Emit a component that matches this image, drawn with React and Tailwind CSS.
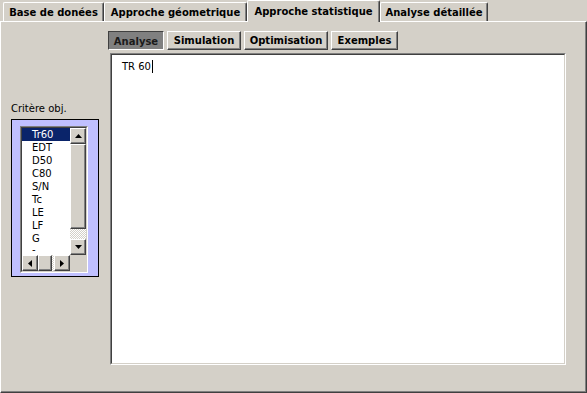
import React from 'react';

const font = "font-['DejaVu_Sans',sans-serif]";

const raised =
  'border border-t-white border-l-white border-r-[#404040] border-b-[#404040] shadow-[inset_-1px_-1px_#808080]';

const Arrow = ({ dir }) => {
  const pts = {
    up: '0,4 3.5,0 7,4',
    down: '0,0 3.5,4 7,0',
    left: '4,0 0,3.5 4,7',
    right: '0,0 4,3.5 0,7',
  }[dir];
  const vertical = dir === 'up' || dir === 'down';
  return (
    <svg width={vertical ? 7 : 4} height={vertical ? 4 : 7} viewBox={vertical ? '0 0 7 4' : '0 0 4 7'}>
      <polygon points={pts} fill="#000" />
    </svg>
  );
};

const ScrollButton = ({ dir }) => (
  <div className={`w-[16px] h-[16px] shrink-0 bg-[#d4d0c8] flex items-center justify-center ${raised}`}>
    <Arrow dir={dir} />
  </div>
);

const Track = ({ className }) => (
  <div
    className={`bg-[repeating-conic-gradient(#ffffff_0_25%,#d4d0c8_0_50%)] bg-[length:2px_2px] ${className}`}
  />
);

const TopTab = ({ label, width, active }) =>
  active ? (
    <div
      className="relative z-10 -mb-px h-[22px] bg-[#d4d0c8] border-t border-l border-t-white border-l-white border-r border-r-[#404040] shadow-[inset_-1px_0_#808080] rounded-t-[2px] flex items-start justify-center pt-[3px] text-[10px] font-bold text-black"
      style={{ width }}
    >
      {label}
    </div>
  ) : (
    <div
      className="h-[19px] bg-[#d4d0c8] border-t border-l border-t-white border-l-white border-r border-r-[#404040] shadow-[inset_-1px_0_#808080] rounded-t-[2px] flex items-center justify-center text-[10px] font-bold text-black"
      style={{ width }}
    >
      {label}
    </div>
  );

const SubTab = ({ label, width, active }) =>
  active ? (
    <div
      className="h-[19px] bg-[#808080] border border-t-[#404040] border-l-[#404040] border-r-white border-b-white flex items-center justify-center text-[10px] font-bold text-[#1a1a1a] pt-[2px]"
      style={{ width }}
    >
      {label}
    </div>
  ) : (
    <div
      className={`h-[19px] bg-[#d4d0c8] flex items-center justify-center text-[10px] font-bold text-black ${raised}`}
      style={{ width }}
    >
      {label}
    </div>
  );

const items = ['Tr60', 'EDT', 'D50', 'C80', 'S/N', 'Tc', 'LE', 'LF', 'G'];

export default function App() {
  return (
    <div className={`w-[587px] h-[393px] bg-[#d4d0c8] flex flex-col ${font} select-none`}>
      {/* top tabs */}
      <div className="h-[21px] flex items-end pl-[3px] shrink-0">
        <TopTab label="Base de donées" width={101} />
        <TopTab label="Approche géometrique" width={143} />
        <TopTab label="Approche statistique" width={133} active />
        <TopTab label="Analyse détaillée" width={108} />
      </div>

      {/* panel */}
      <div className="flex-1 flex border-t border-l border-t-white border-l-white border-r border-b border-r-[#404040] border-b-[#404040] shadow-[inset_-1px_-1px_#808080]">
        {/* left column */}
        <div className="w-[107px] shrink-0 pl-[10px] pt-[80px] flex flex-col">
          <div className="h-[14px] leading-[14px] text-[10px] text-black">Critère obj.</div>
          <div className="mt-[3px] w-[88px] h-[158px] border border-[#000] bg-[#c0c0ff] pl-[8px] pt-[6px]">
            <div className="w-[68px] h-[147px] border border-t-[#808080] border-l-[#808080] border-r-white border-b-white">
              <div className="w-full h-full border border-t-[#404040] border-l-[#404040] border-r-[#d4d0c8] border-b-[#d4d0c8] bg-white flex flex-col">
                <div className="flex h-[127px]">
                  <div className="w-[48px] overflow-hidden">
                    {items.map((it, i) => (
                      <div
                        key={it}
                        className={`h-[13px] leading-[13px] pl-[10px] text-[10px] ${
                          i === 0 ? 'bg-[#0a246a] text-white' : 'text-black'
                        }`}
                      >
                        {it}
                      </div>
                    ))}
                    <div className="h-[10px] leading-[10px] pl-[10px] text-[10px] text-black">-</div>
                  </div>
                  <div className="w-[16px] flex flex-col">
                    <ScrollButton dir="up" />
                    <div className={`h-[85px] bg-[#d4d0c8] ${raised}`} />
                    <Track className="flex-1" />
                    <ScrollButton dir="down" />
                  </div>
                </div>
                <div className="flex h-[16px]">
                  <ScrollButton dir="left" />
                  <div className={`w-[14px] h-[16px] bg-[#d4d0c8] ${raised}`} />
                  <Track className="w-[2px] h-[16px]" />
                  <ScrollButton dir="right" />
                  <div className="flex-1 bg-[#d4d0c8]" />
                </div>
              </div>
            </div>
          </div>
        </div>

        {/* right column */}
        <div className="flex-1 pt-[9px] flex flex-col">
          <div className="flex gap-[3px]">
            <SubTab label="Analyse" width={56} active />
            <SubTab label="Simulation" width={74} />
            <SubTab label="Optimisation" width={84} />
            <SubTab label="Exemples" width={67} />
          </div>
          <div className="mt-[3px] ml-[2px] w-[456px] h-[312px] border border-t-[#808080] border-l-[#808080] border-r-white border-b-white">
            <div className="w-full h-full border border-t-[#404040] border-l-[#404040] border-r-[#d4d0c8] border-b-[#d4d0c8] bg-white pl-[10px] pt-[5px]">
              <div className="flex items-center h-[13px] text-[10px] text-black leading-[13px]">
                TR 60
                <span className="inline-block w-px h-[13px] bg-black ml-[1px]" />
              </div>
            </div>
          </div>
        </div>
      </div>
    </div>
  );
}
